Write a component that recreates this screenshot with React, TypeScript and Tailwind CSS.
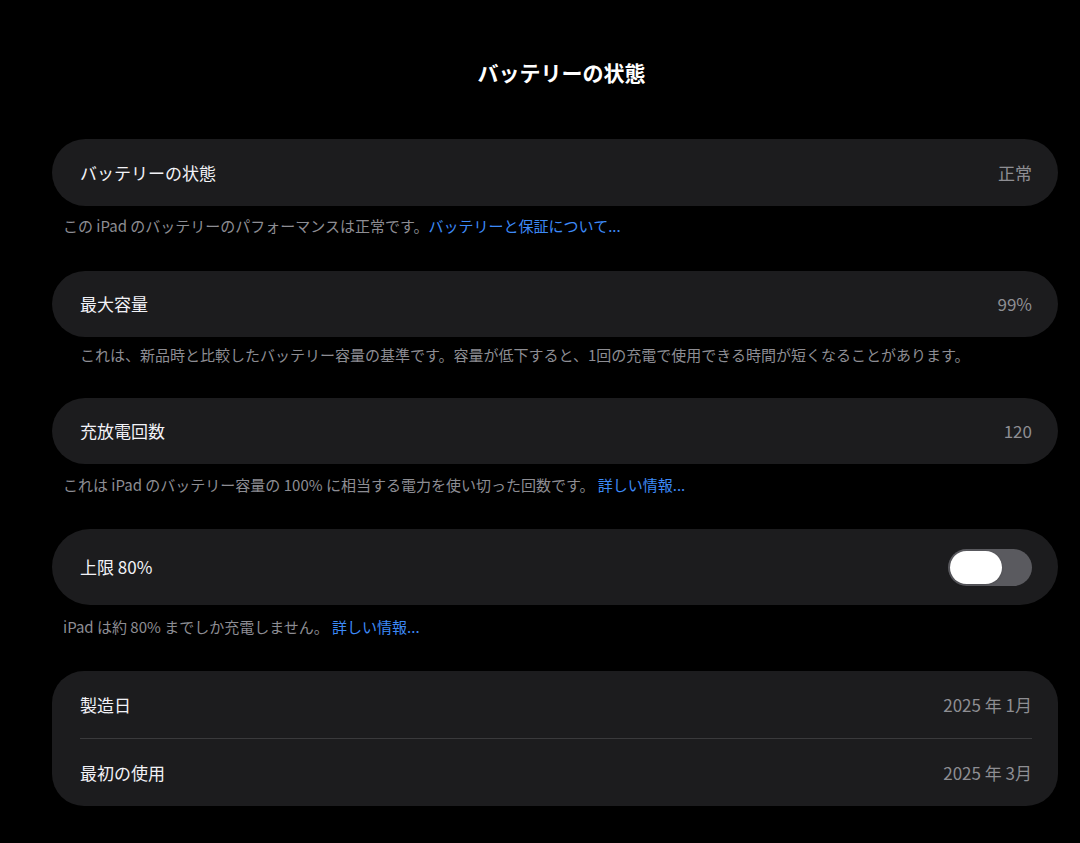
import React from 'react';

const font = { fontFamily: '"Noto Sans CJK JP", "Noto Sans", sans-serif' };

const Row: React.FC<{ label: string; value?: string; children?: React.ReactNode; h?: string }> = ({ label, value, children, h = 'h-[67px]' }) => (
    <div className={`flex items-center justify-between pl-[28px] pr-[26px] ${h}`}>
        <span className="text-[17px] text-[#f2f2f7]">{label}</span>
        {value && <span className="text-[17px] text-[#8e8e93]">{value}</span>}
        {children}
    </div>
);

const Footer: React.FC<{ children: React.ReactNode; pad?: string }> = ({ children, pad = 'pt-[10px] pb-[35px]' }) => (
    <p className={`pl-[11px] text-[15px] leading-[20px] text-[#8d8d93] ${pad}`}>
        {children}
    </p>
);

const Link: React.FC<{ children: React.ReactNode }> = ({ children }) => (
    <span className="text-[#3d8af7]">{children}</span>
);

export default function App() {
    return (
        <div className="min-h-[843px] w-full bg-black pl-[52px] pr-[22px]" style={font}>
            <h1 className="pl-[13px] pt-[58px] pb-[53px] text-center text-[21px] font-bold leading-[28px] text-white">バッテリーの状態</h1>

            <div className="rounded-[34px] bg-[#1c1c1e]">
                <Row label="バッテリーの状態" value="正常" />
            </div>
            <Footer>
                この iPad のバッテリーのパフォーマンスは正常です。<Link>バッテリーと保証について...</Link>
            </Footer>

            <div className="rounded-[34px] bg-[#1c1c1e]">
                <Row label="最大容量" value="99%" h="h-[66px]" />
            </div>
            <p className="pl-[28px] pt-[8px] pb-[33px] text-[15px] leading-[20px] text-[#8d8d93]">
                これは、新品時と比較したバッテリー容量の基準です。容量が低下すると、1回の充電で使用できる時間が短くなることがあります。
            </p>

            <div className="rounded-[34px] bg-[#1c1c1e]">
                <Row label="充放電回数" value="120" h="h-[66px]" />
            </div>
            <Footer pad="pt-[11px] pb-[34px]">
                これは iPad のバッテリー容量の 100% に相当する電力を使い切った回数です。 <Link>詳しい情報...</Link>
            </Footer>

            <div className="rounded-[38px] bg-[#1c1c1e]">
                <Row label="上限 80%" h="h-[76px]">
                    <div className="flex h-[37px] w-[84px] items-center rounded-full bg-[#5a5a5f] px-[2px]">
                        <div className="h-[33px] w-[52px] rounded-full bg-white shadow" />
                    </div>
                </Row>
            </div>
            <Footer pad="pt-[12px] pb-[34px]">
                iPad は約 80% までしか充電しません。 <Link>詳しい情報...</Link>
            </Footer>

            <div className="rounded-[32px] bg-[#1c1c1e]">
                <Row label="製造日" value="2025 年 1月" />
                <div className="ml-[28px] mr-[26px] h-px bg-[#3a3a3c]" />
                <Row label="最初の使用" value="2025 年 3月" />
            </div>
        </div>
    );
}
